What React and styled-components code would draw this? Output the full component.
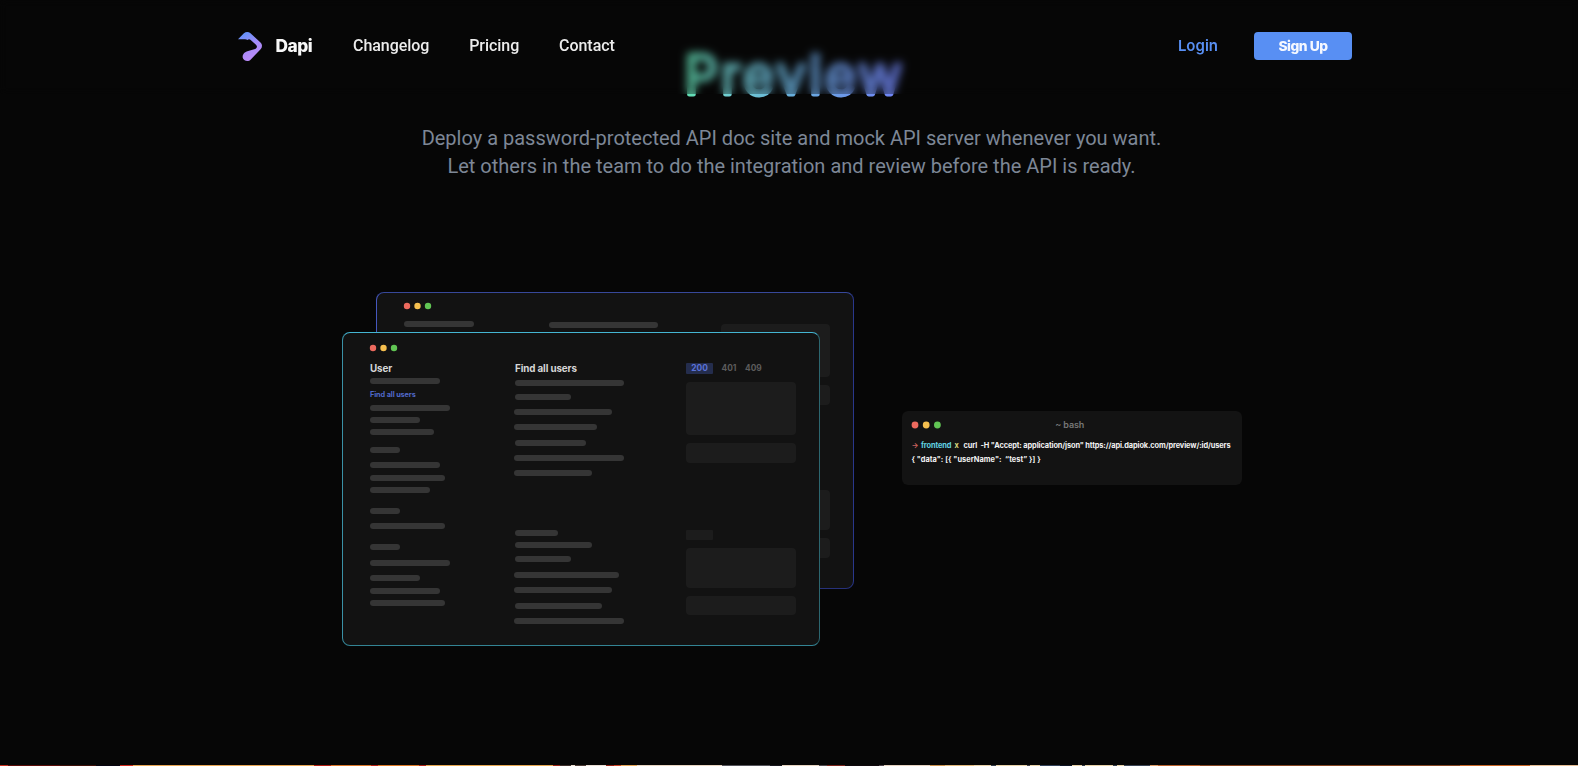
import React from "react";
import styled, { createGlobalStyle } from "styled-components";

const Global = createGlobalStyle`
  *, *::before, *::after { box-sizing: border-box; }
  html, body { margin: 0; height: 100%; background: #060606; overflow: hidden; }
  body { font-family: Roboto, "Liberation Sans", sans-serif; color: #fff; }
`;

const Page = styled.div`
  height: 766px;
  display: flex;
  flex-direction: column;
  overflow: hidden;
  background: #060606;
`;

const Header = styled.header`
  position: fixed;
  inset: 0 0 auto 0;
  z-index: 5;
  height: 94px;
  padding: 0 226px 3px 238px;
  display: flex;
  align-items: center;
  background: rgba(6, 6, 6, 0.25);
  backdrop-filter: blur(4px);
`;

const Brand = styled.a`
  display: flex;
  align-items: center;
  gap: 12.5px;
  width: 115px;
  padding-top: 1px;
  font: 800 17.3px/24px Inter, sans-serif;
  letter-spacing: -0.5px;
  color: #f7f7f7;
`;

const Nav = styled.nav`
  display: flex;
  gap: 39.8px;
  flex: 1;
`;

const NavLink = styled.a`
  font: 500 16px/24px Roboto, sans-serif;
  letter-spacing: -0.04px;
  color: #ececec;
`;

const Actions = styled.div`
  display: flex;
  align-items: center;
  gap: 36px;
`;

const Login = styled.a`
  font: 600 15px/24px Inter, sans-serif;
  color: #588ff3;
`;

const SignUp = styled.a`
  width: 98px;
  height: 28px;
  border-radius: 4px;
  background: #588ff3;
  font: 800 13.8px/28px Inter, sans-serif;
  letter-spacing: -0.5px;
  text-align: center;
  color: #f5f8ff;
`;

const Hero = styled.section`
  display: flex;
  flex-direction: column;
  align-items: center;
  padding-top: 38px;
  height: 292px;
`;

const Title = styled.h1`
  margin: 0 0 0 5px;
  height: 72px;

  svg { display: block; overflow: visible; }

  text {
    font: 300 53px Inter, sans-serif;
    fill: url(#title);
    stroke: url(#title);
    stroke-width: 5px;
    stroke-linejoin: round;
  }
`;

const Lead = styled.p`
  margin: 14px 0 0;
  padding-left: 5px;
  font: 400 20px/28px Roboto, sans-serif;
  text-align: center;
  color: #7d8796;
`;

const Showcase = styled.section`
  flex: 1;
  display: flex;
  align-items: flex-start;
  padding-left: 342px;
`;

const WindowStack = styled.div`
  position: relative;
  width: 512px;
  height: 354px;
`;

const BackWindow = styled.div`
  position: absolute;
  top: 0;
  right: 0;
  width: 478px;
  height: 297px;
  border-radius: 8px;
  border: 1px solid;
  border-color: #37489a #29378c #27317a #4557bd;
  background: #121212;
`;

const FrontWindow = styled(BackWindow)`
  top: 40px;
  right: auto;
  left: 0;
  height: 314px;
  border-color: #44b5d2 #2c666f #338494 #3a91a6;
`;

const Pane = styled.div`
  padding: ${(p) => p.$top}px 0 0 27px;
`;

const Columns = styled.div`
  display: flex;
  align-items: flex-start;
`;

const Column = styled.div`
  display: flex;
  flex-direction: column;
  width: ${(p) => p.$width}px;
  padding-top: ${(p) => p.$top || 0}px;
`;

const Bar = styled.div`
  flex: none;
  width: ${(p) => p.$w}px;
  height: 6px;
  margin-top: ${(p) => p.$gap}px;
  margin-left: ${(p) => p.$out || 0}px;
  border-radius: 3px;
  background: #353535;
`;

const Block = styled.div`
  flex: none;
  width: ${(p) => p.$w || 110}px;
  height: ${(p) => p.$h}px;
  margin-top: ${(p) => p.$gap}px;
  border-radius: ${(p) => p.$r || 4}px;
  background: #1c1c1c;
`;

const PaneTitle = styled.div`
  height: 12px;
  font: 700 9.8px/12px Inter, sans-serif;
  letter-spacing: -0.1px;
  color: #d6d6d6;
  white-space: nowrap;
`;

const PaneLink = styled.div`
  height: 9px;
  margin-top: 6px;
  font: 700 7.3px/9px Inter, sans-serif;
  letter-spacing: -0.1px;
  color: #5068c8;
`;

const Codes = styled.div`
  display: flex;
  align-items: center;
  height: 11px;
  font: 700 8.4px/11px Inter, sans-serif;
  color: #5c5c5c;
`;

const Code = styled.span`
  width: ${(p) => p.$w}px;
`;

const ActiveCode = styled.span`
  width: 27px;
  height: 11px;
  margin-right: 8.5px;
  border-radius: 1px;
  text-align: center;
  background: #242d4d;
  color: #5a72d8;
`;

const Terminal = styled.div`
  width: 340px;
  height: 74px;
  margin: 119px 0 0 48px;
  padding: 7px 10px 7px 9.5px;
  border-radius: 6px;
  background: #131313;
  font: 700 7.4px/14px Inter, sans-serif;
  letter-spacing: 0.04px;
  color: #f2f2f2;
  white-space: pre;
`;

const TerminalBar = styled.div`
  display: grid;
  grid-template-columns: 1fr auto 1fr;
  align-items: center;
  height: 12px;
  margin-bottom: 9px;
  padding-right: 4px;
  font-size: 9px;
  font-weight: 600;
  letter-spacing: -0.1px;
  color: #777;
`;

const Line = styled.div`
  display: flex;
  height: 14px;
`;

const Word = styled.span`
  flex: none;
  width: ${(p) => p.$w}px;
  letter-spacing: -0.12px;
  color: ${(p) => p.$color};
`;

const Command = styled.span`
  flex: none;
  letter-spacing: -0.11px;
`;

const Strip = styled.div`
  flex: none;
  height: 1px;
  background: linear-gradient(90deg, ${(p) => p.$stops});
`;

const leftBars = [
  [6, 80], [6, 50], [6, 64], [12, 30], [9, 70], [7, 75], [6, 60], [15, 30],
  [9, 75], [15, 30], [10, 80], [9, 50], [7, 70], [6, 75],
];

const middleBars = [
  [5, 109], [8, 56], [9, 98, -1], [9, 83, -1], [10, 71], [9, 110, -1], [9, 78, -1],
  [54, 43], [6, 77], [8, 56], [10, 105, -1], [9, 98, -1], [10, 87], [9, 110, -1],
];

const footage = [
  ["#c9301e", 0, 8], ["#5c0d08", 8, 60], ["#3f1008", 60, 96], ["#080410", 96, 120],
  ["#d32a1c", 120, 133], ["#e9a552", 133, 314], ["#b51f12", 314, 331], ["#db7628", 331, 371],
  ["#b92216", 371, 378], ["#dd7825", 378, 419], ["#b02217", 419, 426], ["#e6a64f", 426, 553],
  ["#9c2415", 553, 560], ["#40302c", 560, 571], ["#eee0d2", 571, 575], ["#4e3c35", 575, 586],
  ["#ebdfd5", 586, 606], ["#902014", 606, 614], ["#cf4525", 614, 621], ["#e8a758", 621, 637],
  ["#e8d5c2", 637, 722], ["#55545b", 722, 770], ["#19171e", 770, 782], ["#e8d5c2", 782, 819],
  ["#524c50", 819, 827], ["#7c241b", 827, 845], ["#10080c", 845, 879], ["#50454b", 879, 884],
  ["#e5d2c0", 884, 930], ["#cc914c", 930, 945], ["#e2b87b", 945, 974], ["#ead2a9", 974, 991],
  ["#343c49", 991, 996], ["#e9d2a8", 996, 1027], ["#46444a", 1027, 1030], ["#e9d2a8", 1030, 1040],
  ["#34435b", 1040, 1060], ["#0d1325", 1060, 1072], ["#e9d2a8", 1072, 1082], ["#343c49", 1082, 1085],
  ["#e9d2a8", 1085, 1113], ["#343c49", 1113, 1117], ["#e9d2a8", 1117, 1124], ["#3c4555", 1124, 1150],
  ["#df9d68", 1150, 1158], ["#b9602c", 1158, 1200], ["#854521", 1200, 1460], ["#c96524", 1460, 1530],
  ["#e6bd94", 1530, 1578],
].map(([c, a, b]) => `${c} ${a}px ${b}px`).join(", ");

function Lights({ radius = 3.2, step = 10.5 }) {
  return (
    <svg width="32" height="7" viewBox="0 0 32 7" display="block" overflow="visible">
      {["#ed6a5e", "#f5bf4f", "#61c554"].map((color, i) => (
        <circle key={color} cx={3 + i * step} cy="3" r={radius} fill={color} />
      ))}
    </svg>
  );
}

function Bars({ items }) {
  return items.map(([gap, w, out], i) => <Bar key={i} $gap={gap} $w={w} $out={out} />);
}

function Logo() {
  return (
    <svg width="25" height="31" viewBox="0 0 25 31">
      <defs>
        <linearGradient id="logo" x1="0.2" y1="0" x2="0.6" y2="1">
          <stop offset="0" stopColor="#5b93fa" />
          <stop offset="0.5" stopColor="#a48bf8" />
          <stop offset="1" stopColor="#bd8af8" />
        </linearGradient>
      </defs>
      <path
        fill="url(#logo)"
        d="M0 8.2L5.9 2.2C7.8.5 10.7.6 12.5 2.2L22.5 11.4C24.5 13.3 24.5 16.2 22.6 18.2L12.8 28.5C11.2 30.2 8.5 30.5 6.6 29.3C4.5 28 4 25.3 5.3 23.3C6.3 21.5 8 20.7 10.2 20L16.2 18.2C19.3 17.2 19.8 15.4 17.7 13.4L12.4 8.7C11.5 7.9 10.5 8 9.5 8.9C8.2 7.8 6.5 8.2 4.7 8.3C3 8.4 1.5 8 0 8.2Z"
      />
    </svg>
  );
}

export default function App() {
  return (
    <Page>
      <Global />
      <Header>
        <Brand><Logo />Dapi</Brand>
        <Nav>
          <NavLink>Changelog</NavLink>
          <NavLink>Pricing</NavLink>
          <NavLink>Contact</NavLink>
        </Nav>
        <Actions>
          <Login>Login</Login>
          <SignUp>Sign Up</SignUp>
        </Actions>
      </Header>
      <Hero>
        <Title>
          <svg width="220" height="72" viewBox="0 0 220 72">
            <defs>
              <linearGradient id="title" gradientUnits="userSpaceOnUse" x1="0" y1="0" x2="220" y2="0">
                <stop offset="0" stopColor="#5fe0ae" />
                <stop offset="0.2" stopColor="#70cfd0" />
                <stop offset="0.5" stopColor="#68aedb" />
                <stop offset="0.95" stopColor="#7086f6" />
              </linearGradient>
            </defs>
            <text x="2.5" y="56.2" textLength="217">Preview</text>
          </svg>
        </Title>
        <Lead>
          Deploy a password-protected API doc site and mock API server whenever you want.
          <br />
          Let others in the team to do the integration and review before the API is ready.
        </Lead>
      </Hero>
      <Showcase>
        <WindowStack>
          <BackWindow>
            <Pane $top={10}>
              <Lights />
              <Columns>
                <Column $width={145} $top={11}><Bar $w={70} $gap={0} /></Column>
                <Column $width={172} $top={12}><Bar $w={109} $gap={0} /></Column>
                <Column $width={109} $top={14}>
                  <Block $w={109} $h={53} $gap={0} />
                  <Block $w={109} $h={20} $gap={8} />
                  <Block $w={109} $h={40} $gap={85} />
                  <Block $w={109} $h={20} $gap={8} />
                </Column>
              </Columns>
            </Pane>
          </BackWindow>
          <FrontWindow>
            <Pane $top={12}>
              <Lights />
              <Columns>
                <Column $width={145} $top={11}>
                  <PaneTitle>User</PaneTitle>
                  <Bar $w={70} $gap={3} />
                  <PaneLink>Find all users</PaneLink>
                  <Bars items={leftBars} />
                </Column>
                <Column $width={171} $top={11}>
                  <PaneTitle>Find all users</PaneTitle>
                  <Bars items={middleBars} />
                </Column>
                <Column $width={110} $top={11}>
                  <Codes>
                    <ActiveCode>200</ActiveCode>
                    <Code $w={23.5}>401</Code>
                    <Code $w={20}>409</Code>
                  </Codes>
                  <Block $h={53} $gap={8} />
                  <Block $h={20} $gap={8} />
                  <Block $w={27} $h={10} $gap={67} $r={1} />
                  <Block $h={40} $gap={8} />
                  <Block $h={19} $gap={8} />
                </Column>
              </Columns>
            </Pane>
          </FrontWindow>
        </WindowStack>
        <Terminal>
          <TerminalBar>
            <Lights radius={3.4} step={11.2} />
            <span>~ bash</span>
          </TerminalBar>
          <Line>
            <Word $w={9.5} $color="#c8605e">→</Word>
            <Word $w={33.5} $color="#62d3e3">frontend</Word>
            <Word $w={9} $color="#d9d77c">x</Word>
            <Command>{'curl  -H "Accept: application/json" https://api.dapiok.com/preview/:id/users'}</Command>
          </Line>
          <Line>{'{ "data": [{ "userName":  “test” }] }'}</Line>
        </Terminal>
      </Showcase>
      <Strip $stops={footage} />
    </Page>
  );
}
